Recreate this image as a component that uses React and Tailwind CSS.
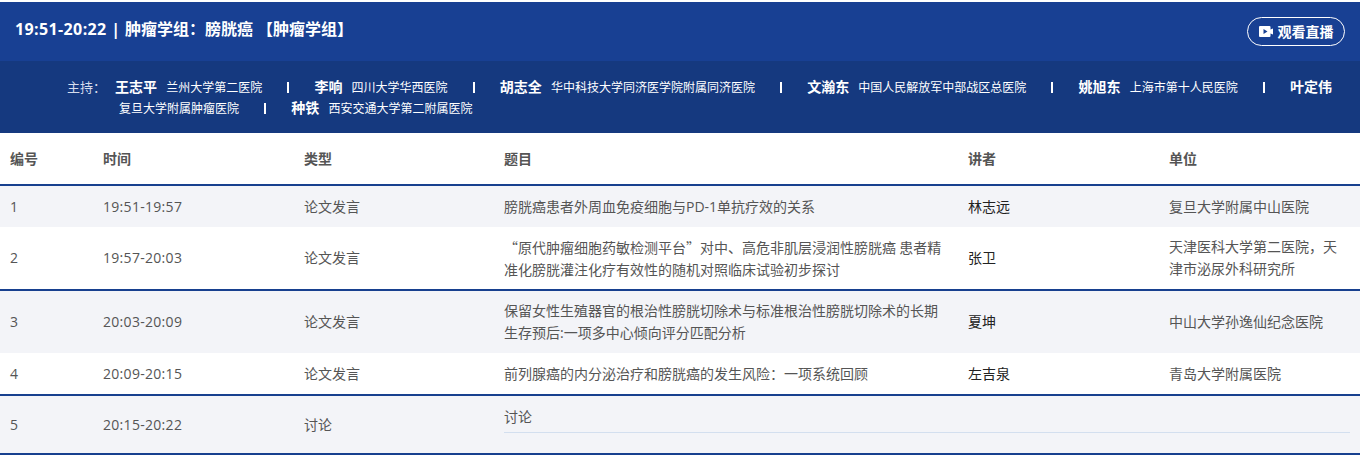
const font = { fontFamily: '"Open Sans","Noto Sans CJK SC",sans-serif' };
const cjk = { fontFamily: '"Noto Sans CJK SC",sans-serif' };

const hosts = [
  ["王志平", "兰州大学第二医院"],
  ["李响", "四川大学华西医院"],
  ["胡志全", "华中科技大学同济医学院附属同济医院"],
  ["文瀚东", "中国人民解放军中部战区总医院"],
  ["姚旭东", "上海市第十人民医院"],
  ["叶定伟", "复旦大学附属肿瘤医院"],
  ["种铁", "西安交通大学第二附属医院"],
];

const rows = [
  { n: "1", t: "19:51-19:57", k: "论文发言", title: "膀胱癌患者外周血免疫细胞与PD-1单抗疗效的关系", sp: "林志远", org: "复旦大学附属中山医院", bg: "bg-[#f3f4f8]", h: "h-[41px]" },
  { n: "2", t: "19:57-20:03", k: "论文发言", title: "“原代肿瘤细胞药敏检测平台”对中、高危非肌层浸润性膀胱癌 患者精准化膀胱灌注化疗有效性的随机对照临床试验初步探讨", sp: "张卫", org: "天津医科大学第二医院，天津市泌尿外科研究所", bg: "bg-white", h: "h-[64px] border-b-2 border-[#17408f]" },
  { n: "3", t: "20:03-20:09", k: "论文发言", title: "保留女性生殖器官的根治性膀胱切除术与标准根治性膀胱切除术的长期生存预后:一项多中心倾向评分匹配分析", sp: "夏坤", org: "中山大学孙逸仙纪念医院", bg: "bg-[#f3f4f8]", h: "h-[62px]" },
  { n: "4", t: "20:09-20:15", k: "论文发言", title: "前列腺癌的内分泌治疗和膀胱癌的发生风险：一项系统回顾", sp: "左吉泉", org: "青岛大学附属医院", bg: "bg-white", h: "h-[43px] border-b-2 border-[#17408f]" },
];

const cols = "grid grid-cols-[93px_201px_200px_464px_201px_1fr] items-center pl-2.5 pr-2.5 text-[14px] leading-[22px]";

export default function App() {
  return (
    <div className="w-[1360px] pt-0.5 bg-white" style={font}>
      <div className="flex h-[59px] items-center justify-between bg-[#184093] pl-[15px] pr-[15px]">
        <div className="mb-[6px] text-[16px] font-bold leading-6 text-white">
          <span className="tracking-[0.38px]">19:51-20:22 | </span>肿瘤学组：膀胱癌 【肿瘤学组】
        </div>
        <div className="flex h-[29px] w-[98px] items-center justify-center gap-[5px] rounded-full border border-white text-[14px] font-bold text-white">
          <svg width="14" height="11" viewBox="0 0 14 11" fill="white">
            <path fillRule="evenodd" d="M1 0h9.500a1 1 0 0 1 1 1v2.500L14 2.500v6l-2.500-1V10a1 1 0 0 1-1 1H1a1 1 0 0 1-1-1V1a1 1 0 0 1 1-1zM4.500 3v5l4-2.500z" />
          </svg>
          观看直播
        </div>
      </div>

      <div className="flex h-[72px] bg-[#15397f] pl-[67px] pr-[20px] pt-[16px] text-[12px] leading-[20px] text-white">
        <div className="w-[47px] shrink-0 text-[13px] text-[#d5dcec]">主持：</div>
        <div>
          {hosts.map(([name, org], i) => (
            <span key={name}>
              <span className="mx-px text-[14px] font-bold">{name}</span>{" "}
              <span className="ml-[5px]">{org}</span>
              {i < hosts.length - 1 && (
                <>
                  {" "}
                  <span className="ml-[22px] mr-[21px] inline-block h-[11px] w-0.5 bg-white align-[-1px]" />{" "}
                </>
              )}
            </span>
          ))}
        </div>
      </div>

      <div className={`${cols} h-[53px] border-b-2 border-[#17408f] bg-white font-bold text-[#555555]`}>
        <div>编号</div>
        <div>时间</div>
        <div>类型</div>
        <div>题目</div>
        <div>讲者</div>
        <div>单位</div>
      </div>

      {rows.map((r) => (
        <div key={r.n} className={`${cols} ${r.bg} ${r.h} text-[#555555]`}>
          <div>{r.n}</div>
          <div className="tracking-[0.3px]">{r.t}</div>
          <div>{r.k}</div>
          <div className="pr-[20px]" style={r.n === "2" ? cjk : undefined}>{r.title}</div>
          <div className="text-[#222222]">{r.sp}</div>
          <div>{r.org}</div>
        </div>
      ))}

      <div className={`${cols} h-[59px] border-b-2 border-[#17408f] bg-[#f3f4f8] text-[#555555]`}>
        <div>5</div>
        <div className="tracking-[0.3px]">20:15-20:22</div>
        <div>讨论</div>
        <div className="col-span-3 mt-[10px] h-[27px] self-start border-b border-[#d3dfef]">讨论</div>
      </div>
      <div className="h-0.5 bg-white" />
    </div>
  );
}
